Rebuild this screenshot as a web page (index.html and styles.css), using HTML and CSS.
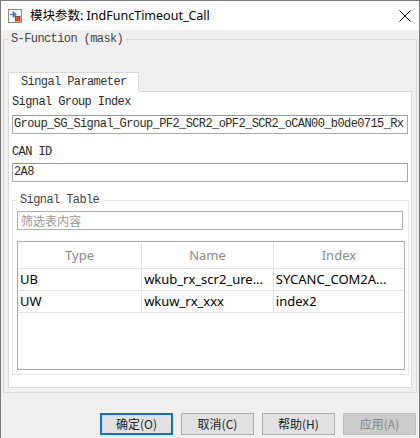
FILE: index.html
```html
<!DOCTYPE html>
<html>
<head>
<meta charset="utf-8">
<link rel="stylesheet" href="styles.css">
</head>
<body>
<div class="window">
  <div class="titlebar">
    <svg class="app-icon" width="14" height="14" viewBox="0 0 14 14">
      <rect x="0.5" y="0.5" width="13" height="13" fill="#f4f4f4" stroke="#8c8c8c"/>
      <path d="M2 5.5H5" stroke="#2f7fd0" stroke-width="1"/>
      <path d="M5 2.5L8.5 5.5L5 8.5Z" fill="#3b8de0" stroke="#1f62a8" stroke-width="0.6"/>
      <rect x="7.5" y="7.5" width="4.5" height="4.5" fill="#e2541c" stroke="#8a2a0a" stroke-width="0.8"/>
    </svg>
    <span class="title">模块参数: IndFuncTimeout_Call</span>
    <svg class="close" width="12" height="12" viewBox="0 0 12 12">
      <path d="M0.5 0.5L11.5 11.5M11.5 0.5L0.5 11.5" stroke="#000" stroke-width="1"/>
    </svg>
  </div>
  <div class="content">
    <fieldset class="mask">
      <legend class="mask-legend">S-Function (mask)</legend>
      <div class="tabs"><div class="tab">Singal Parameter</div></div>
      <div class="panel">
        <div class="label label-first">Signal Group Index</div>
        <div class="input input-first">Group_SG_Signal_Group_PF2_SCR2_oPF2_SCR2_oCAN00_b0de0715_Rx</div>
        <div class="label label-second">CAN ID</div>
        <div class="input input-second">2A8</div>
        <fieldset class="group">
          <legend class="group-legend">Signal Table</legend>
          <div class="filter">筛选表内容</div>
          <div class="table-wrap">
            <table class="grid">
              <colgroup><col class="c1"><col class="c2"><col class="c3"></colgroup>
              <thead>
                <tr><th>Type</th><th>Name</th><th>Index</th></tr>
              </thead>
              <tbody>
                <tr><td>UB</td><td>wkub_rx_scr2_ure...</td><td>SYCANC_COM2A...</td></tr>
                <tr><td>UW</td><td>wkuw_rx_xxx</td><td>index2</td></tr>
              </tbody>
            </table>
          </div>
        </fieldset>
      </div>
    </fieldset>
    <div class="buttons">
      <div class="btn btn-default">确定(O)</div>
      <div class="btn">取消(C)</div>
      <div class="btn">帮助(H)</div>
      <div class="btn btn-disabled">应用(A)</div>
    </div>
  </div>
</div>
</body>
</html>
```
FILE: styles.css
```css
* { box-sizing: border-box; }
html, body { margin: 0; padding: 0; }
body {
  width: 420px;
  height: 438px;
  overflow: hidden;
  background: #f0f0f0;
  font-family: "Liberation Mono", monospace;
}
.window {
  width: 420px;
  height: 438px;
  border: 1px solid #7a7a7a;
  border-bottom: none;
  display: flex;
  flex-direction: column;
  background: #f0f0f0;
}
.titlebar {
  height: 29px;
  flex: none;
  background: #fff;
  display: flex;
  align-items: center;
  padding-left: 7px;
}
.app-icon { flex: none; display: block; }
.title {
  margin-left: 8px;
  font: 12.5px "Noto Sans", "Noto Sans CJK SC", sans-serif;
  color: #000;
  line-height: 16px;
}
.close { margin-left: auto; margin-right: 8px; display: block; }

.content {
  flex: 1;
  padding: 0 2px;
  display: flex;
  flex-direction: column;
}
.mask {
  margin: 2px 0 0 0;
  padding: 26px 4px 4px 4px;
  border: 1px solid #d8d8d8;
  min-width: 0;
}
.mask-legend {
  padding: 0 3px;
  font-size: 12px;
  letter-spacing: -0.6px;
  line-height: 14px;
  color: #444;
}
.tabs { display: flex; }
.tab {
  width: 131px;
  height: 20px;
  background: #fff;
  border: 1px solid #dadada;
  border-bottom: 1px solid #fff;
  margin-bottom: -1px;
  position: relative;
  padding-left: 12px;
  font-size: 12px;
  letter-spacing: -0.6px;
  line-height: 18px;
  color: #333;
}
.panel {
  background: #fff;
  border: 1px solid #dadada;
  height: 297px;
  padding: 2px 2px 0 3px;
  display: flex;
  flex-direction: column;
}
.label {
  font-size: 12px;
  letter-spacing: -0.6px;
  line-height: 16px;
  height: 16px;
  color: #2a2a2a;
  white-space: nowrap;
}
.label-second { margin-top: 10px; }
.input {
  height: 19px;
  margin-right: 1px;
  border: 1px solid #a9a9a9;
  border-top-color: #9a9a9a;
  background: #fff;
  font-size: 12px;
  letter-spacing: -0.6px;
  line-height: 17px;
  padding-left: 1px;
  white-space: nowrap;
  overflow: hidden;
  color: #2a2a2a;
}
.input-first { margin-top: 5px; }
.input-second { margin-top: 3px; }

.group {
  margin: 11px 0 0 0;
  padding: 4px 3px 4px 4px;
  border: 1px solid #e6e6e6;
  min-width: 0;
}
.group-legend {
  padding: 0 3px;
  font-size: 12px;
  letter-spacing: -0.6px;
  line-height: 14px;
  color: #444;
}
.filter {
  height: 19px;
  margin-right: 2px;
  border: 1px solid #b0b0b0;
  font: 12px "Noto Sans CJK SC", sans-serif;
  line-height: 17px;
  padding-left: 3px;
  color: #9a9a9a;
}
.table-wrap {
  margin-top: 11px;
  height: 129px;
  border: 1px solid #a8a8b0;
  border-right-color: #b8b8c0;
  background: #fff;
}
.grid {
  width: 100%;
  border-collapse: collapse;
  table-layout: fixed;
  font-family: "Noto Sans", sans-serif;
  font-size: 13px;
}
.c1 { width: 123px; }
.c2 { width: 131px; }
.c3 { width: 130px; }
.grid th {
  height: 26px;
  font-weight: normal;
  color: #8a8a8a;
  text-align: center;
  border-right: 1px solid #e4e4e4;
  border-bottom: 1px solid #e4e4e4;
  padding: 0;
}
.grid td {
  height: 22px;
  padding: 0 0 0 2px;
  color: #000;
  border-right: 1px solid #e4e4e4;
  border-bottom: 1px solid #e4e4e4;
  white-space: nowrap;
  overflow: hidden;
}
.grid th:last-child, .grid td:last-child { border-right: none; }

.buttons {
  margin-top: 20px;
  display: flex;
  justify-content: flex-end;
  gap: 8px;
  padding-right: 1px;
}
.btn {
  width: 73px;
  height: 22px;
  border: 1px solid #adadad;
  background: #e1e1e1;
  font: 12px "Noto Sans CJK SC", sans-serif;
  line-height: 20px;
  text-align: center;
  color: #222;
}
.btn-default {
  border: 2px solid #0078d7;
  line-height: 18px;
}
.btn-disabled {
  background: #cccccc;
  border-color: #bfbfbf;
  color: #838383;
}
```
